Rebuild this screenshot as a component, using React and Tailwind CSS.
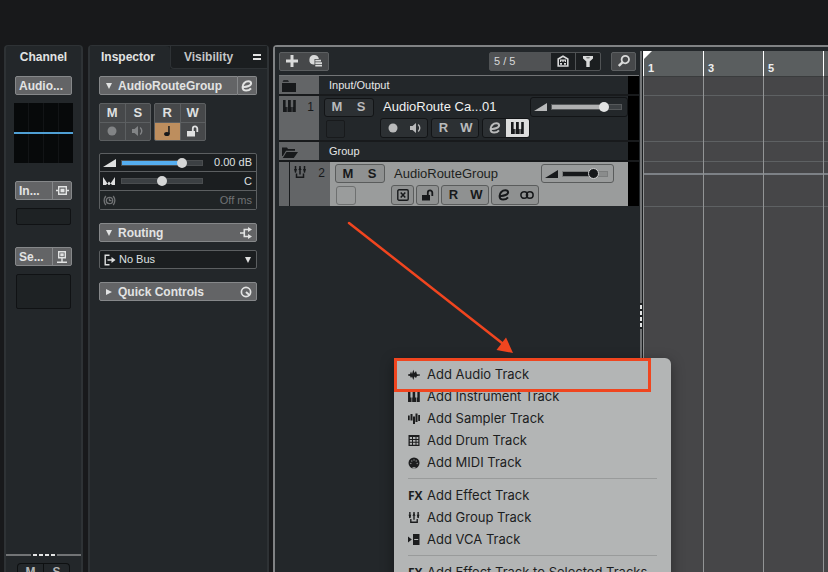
import React from "react";

function Icon({ w = 12, h = 12, box, className = "", children }) {
  return (
    <svg width={w} height={h} viewBox={box || `0 0 ${w} ${h}`} className={`shrink-0 ${className}`} fill="currentColor" aria-hidden="true">
      {children}
    </svg>
  );
}

const EditIcon = () => (
  <Icon w={12} h={12}>
    <path d="M2.4 6.9C6 7.1 10.2 5.6 10.1 3.3C10 1.8 8.6 1.3 7.3 1.3C4.2 1.3 1.6 3.8 1.6 7C1.6 9.3 3.1 10.6 5.2 10.6C7.1 10.6 8.8 9.8 10 8.3" fill="none" stroke="currentColor" strokeWidth="2" />
  </Icon>
);
const RecordIcon = () => (
  <Icon w={10} h={10}><circle cx="5" cy="5" r="4.500" /></Icon>
);
const SpeakerIcon = () => (
  <Icon w={13} h={12}>
    <path d="M1 4h2.500L7 1v10L3.500 8H1z" />
    <path d="M9.200 2.500q3.200 3.500 0 7" fill="none" stroke="currentColor" strokeWidth="1.300" />
  </Icon>
);
const NoteIcon = () => (
  <Icon w={10} h={12}>
    <path d="M6.200 1h1.500v8H6.200z" /><ellipse cx="4.900" cy="9" rx="2.800" ry="2" />
  </Icon>
);
const LockIcon = () => (
  <Icon w={13} h={12}>
    <path d="M1 6h8v5.500H1z" /><path d="M6.800 6V3.700a2.200 2.200 0 0 1 4.500 0V7" fill="none" stroke="currentColor" strokeWidth="1.800" />
  </Icon>
);
const WedgeIcon = () => (
  <Icon w={13} h={8}><path d="M0 8 13 0v8z" /></Icon>
);
const PanIcon = () => (
  <Icon w={12} h={8}><path d="M0 0 5.500 8H0zM12 0v8H6.500zM3 8h6L6 4.500z" /></Icon>
);
const DelayIcon = () => (
  <Icon w={13} h={11}>
    <g fill="none" stroke="currentColor" strokeWidth="1.300">
      <circle cx="6.500" cy="5.500" r="3.200" /><path d="M6.500 3.500v2.200h2M2.800 1Q-.5 5.500 2.800 10M10.200 1q3.300 4.500 0 9" />
    </g>
  </Icon>
);
const InsertIcon = () => (
  <Icon w={13} h={9}>
    <path d="M2.700.7h7.600v7.600H2.700zM0 4.500h2.500M10.500 4.500H13" fill="none" stroke="currentColor" strokeWidth="1.400" />
    <path d="M4.500 2.700h4v3.600h-4z" />
  </Icon>
);
const SendIcon = () => (
  <Icon w={12} h={12}>
    <path d="M2.700.7h6.600v6.100H2.700zM6 7v3.500M1 11.200h10" fill="none" stroke="currentColor" strokeWidth="1.400" />
    <path d="M4.300 2.300h3.400v3H4.300z" />
  </Icon>
);
const RouteIcon = () => (
  <Icon w={12} h={12}>
    <path d="M0 6h4M9.500 2.500H4.300v7h5.200" fill="none" stroke="currentColor" strokeWidth="1.600" />
    <path d="M8 0l4 2.500L8 5zM8 7l4 2.500L8 12z" />
  </Icon>
);
const KnobIcon = () => (
  <Icon w={12} h={12}>
    <circle cx="6" cy="6" r="4.600" fill="none" stroke="currentColor" strokeWidth="1.700" />
    <path d="M6 6l4 3.500" stroke="currentColor" strokeWidth="2" />
  </Icon>
);
const OutputIcon = () => (
  <Icon w={12} h={12}>
    <path d="M5.500 1.200H1.200v9.600h4.300M3.500 6H9" fill="none" stroke="currentColor" strokeWidth="1.400" />
    <path d="M7.500 3l4 3-4 3z" />
  </Icon>
);
const DownIcon = () => (
  <Icon w={6} h={6}><path d="M0 0h6L3 6z" /></Icon>
);
const RightIcon = () => (
  <Icon w={6} h={6}><path d="M0 0 6 3 0 6z" /></Icon>
);
const PlusIcon = () => (
  <Icon w={12} h={12}><path d="M4.500 0h3v4.500H12v3H7.500V12h-3V7.500H0v-3h4.500z" /></Icon>
);
const PresetIcon = () => (
  <Icon w={13} h={12}>
    <path d="M5 0a5 4.800 0 0 1 4.900 4H5.500v5.500H4.200A4.800 4.800 0 0 1 5 0z" />
    <path d="M6.300 4.800H12v1.700H6.300zM6.300 7.300H13v1.700H6.300zM6.300 9.800H13v1.700H6.300z" />
  </Icon>
);
const HomeIcon = () => (
  <Icon w={12} h={12}>
    <path d="M1.200 11V4L6 1.200 10.800 4v7z" fill="none" stroke="currentColor" strokeWidth="1.600" />
    <path d="M3 4.500h6V7H7.800V5.700H6.600V7H5.400V5.700H4.200V7H3zM3 8h2v1.700H3zM7 8h2v1.700H7z" />
  </Icon>
);
const FilterIcon = () => (
  <Icon w={10} h={11}><path d="M0 0h10v2.500L6.700 5.500V11H3.300V5.500L0 2.500z" /><ellipse cx="5" cy="1.700" rx="2" ry=".7" className="text-[#77797a]" /></Icon>
);
const SearchIcon = () => (
  <Icon w={12} h={12}>
    <circle cx="7.300" cy="4.600" r="3.700" fill="none" stroke="currentColor" strokeWidth="1.800" /><path d="M4.700 7.200.8 11" stroke="currentColor" strokeWidth="2.400" />
  </Icon>
);
const FolderIcon = () => (
  <Icon w={14} h={12}><path d="M0 3h14v9H0zM.5 1.800 1.500.3h4.500l1 1.500z" /></Icon>
);
const OpenFolderIcon = () => (
  <Icon w={16} h={12}><path d="M0 10V1.500h5l1 1.500h7v1.800H4L.8 10zM4.500 6H16l-4.200 6H.8z" /></Icon>
);
const keysPath = "M0 0h2.600v7h1.200v5H0zM5 0h2.800v7h.9v5H4.500V7H5zM10.200 0h2.600v12H9.400V7h.8z";
const KeysIcon = () => (
  <Icon w={13} h={12}><path d={keysPath} /></Icon>
);
const GroupIcon = ({ w = 12, h = 12 }) => (
  <Icon w={w} h={h} box="0 0 12 12">
    <path d="M1.500 0v6.500M6 0v8.500M10.500 0v6.500M2.500 7.500v3.700h7V7.500" fill="none" stroke="currentColor" strokeWidth="1.500" />
    <path d="M0 3h3L1.500 7zM4.300 4 6 1.200 7.700 4zM9 3h3l-1.500 4z" />
  </Icon>
);
const CrossBoxIcon = () => (
  <Icon w={12} h={12}>
    <rect x=".8" y=".8" width="10.400" height="10.400" rx="1.200" fill="none" stroke="currentColor" strokeWidth="1.400" />
    <path d="M3.700 3.500 8.300 8.500M8.300 3.500 3.700 8.500" stroke="currentColor" strokeWidth="1.500" />
  </Icon>
);
const LinkIcon = () => (
  <Icon w={14} h={10}>
    <circle cx="4.200" cy="5" r="3.300" fill="none" stroke="currentColor" strokeWidth="1.600" /><circle cx="9.800" cy="5" r="3.300" fill="none" stroke="currentColor" strokeWidth="1.600" />
  </Icon>
);

const MenuWave = () => (
  <Icon w={12} h={12}><path d="M0 5.500 2 5 3 2.500 4 5 5.300.8 6.500 4 8 2l1 3.200L12 5.500v1L9 7 8 9 6.500 7.500 5.300 11 4 7.500 3 9 2 7 0 6.500z" /></Icon>
);
const MenuKeys = () => (
  <Icon w={12} h={11} box="0 0 13 12"><path d={keysPath} /></Icon>
);
const MenuSampler = () => (
  <Icon w={12} h={11}><path d="M0 2.500h1.700v4.800H0zM2.500 1h2v6.500h-2zM5 3.500h2V11H5zM7.500.5h2v8.500h-2zM10.200 2H12v6h-1.800z" /></Icon>
);
const MenuDrum = () => (
  <Icon w={12} h={11}><path fillRule="evenodd" d="M.5 0h11v11H.5zM1.800 2v2H4V2zM5 2v2h2.500V2zM8.500 2v2h1.800V2zM1.800 5v1.700H4V5zM5 5v1.700h2.500V5zM8.500 5v1.700h1.800V5zM1.800 7.800v1.900H4V7.800zM5 7.800v1.900h2.500V7.800zM8.500 7.800v1.900h1.800V7.800z" /></Icon>
);
const MenuMidi = () => (
  <Icon w={12} h={12}>
    <circle cx="6" cy="6" r="5.500" />
    <g className="text-[#8b8d8d]"><circle cx="2.800" cy="6.500" r=".7" /><circle cx="3.800" cy="4" r=".7" /><circle cx="6" cy="3" r=".7" /><circle cx="8.200" cy="4" r=".7" /><circle cx="9.200" cy="6.500" r=".7" /><path d="M4.500 10h3v2h-3z" /></g>
  </Icon>
);
const MenuVca = () => (
  <Icon w={12} h={11}><path fillRule="evenodd" d="M0 2.500 3.800 5.500 0 8.500zM5 0h6.500v11H5zM6.200 5v1h4V5z" /></Icon>
);
const MenuFx = () => <span className="font-['Open_Sans',sans-serif] text-[12px] font-bold">FX</span>;

const raised = "flex h-[19px] w-full items-center rounded-[2px] border border-[#86888a] bg-[#636466] font-bold text-[#e2e3e3]";
const thumb =
  "appearance-none [&::-webkit-slider-thumb]:appearance-none [&::-webkit-slider-thumb]:rounded-full [&::-webkit-slider-thumb]:size-[10px] h-[6px] min-w-0";

function Slot({ label, icon }) {
  return (
    <button className={`${raised} justify-between text-[12px]`}>
      <span className="pl-[3px]">{label}</span>
      {icon && <span className="flex h-full w-[19px] items-center justify-center border-l border-[#86888a]">{icon}</span>}
    </button>
  );
}

function Channel() {
  return (
    <section className="flex w-[79px] shrink-0 flex-col rounded-t border-x-2 border-t border-[#2e3235] bg-[#23272a]">
      <h2 className="mt-[3px] text-center text-[12px] leading-[16px] font-bold text-[#e2e3e3]">Channel</h2>
      <div className="mt-[11px] flex flex-1 flex-col px-[9px]">
        <Slot label="Audio..." />
        <div className="-mx-px mt-2 flex h-[60px] items-center bg-[repeating-linear-gradient(90deg,#07090a_0_14px,#121416_14px_15px)]">
          <div className="h-[2px] w-full bg-[#4f9fd4]" />
        </div>
        <div className="mt-[18px]"><Slot label="In..." icon={<InsertIcon />} /></div>
        <div className="mx-px mt-2 h-[17px] rounded-[2px] border border-[#101214] bg-[#1e2224]" />
        <div className="mt-[22px]"><Slot label="Se..." icon={<SendIcon />} /></div>
        <div className="mx-px mt-2 h-[35px] rounded-[2px] border border-[#101214] bg-[#1e2224]" />
      </div>
      <div className="flex h-[2px] shrink-0 gap-[2px]">
        <span className="flex-1 bg-[#727476]" />
        {[0, 1, 2, 3].map((i) => <span key={i} className="w-1 bg-[#e4e5e5]" />)}
        <span className="flex-1 bg-[#727476]" />
      </div>
      <div className="mx-auto mt-[7px] flex h-[9px] w-[53px] shrink-0 items-start overflow-hidden rounded-t border border-b-0 border-[#0e1011] text-[12px] leading-[16px] font-bold text-[#b5b6b7]">
        <button className="flex-1 border-r border-[#0e1011]">M</button>
        <button className="flex-1">S</button>
      </div>
    </section>
  );
}

function Pad({ items }) {
  return (
    <div className="grid h-[38px] w-[52px] grid-cols-2 grid-rows-2 gap-px overflow-hidden rounded-[2px] border border-[#5c5f61] bg-[#5c5f61] text-[13px] font-bold text-[#dfe0e0]">
      {items.map(([name, face, tone]) => (
        <button key={name} aria-label={name} className={`flex min-h-0 items-center justify-center leading-[16px] ${tone || "bg-[#46484a]"}`}>{face}</button>
      ))}
    </div>
  );
}

function Heading({ caret, children, icon }) {
  return (
    <button className={`${raised} pr-[4px] pl-[6px] text-[12px]`}>
      {caret}
      <span className="flex-1 pl-[6px] text-left">{children}</span>
      {icon}
    </button>
  );
}

function Inspector() {
  return (
    <section className="ml-[5px] w-[181px] shrink-0 rounded-t border-x-2 border-t border-[#2e3235] bg-[#23272a]">
      <div role="tablist" className="flex h-[23px] bg-[#1b1e20] text-[12px] font-bold text-[#e2e3e3]">
        <button role="tab" aria-selected="true" className="w-[80px] rounded-tr border-b border-[#23272a] bg-[#23272a] pr-1">Inspector</button>
        <button role="tab" aria-selected="false" className="w-[76px] rounded-bl border-b border-l border-[#2e3235] text-[#c5c6c7]">Visibility</button>
        <button aria-label="Tab options" className="flex flex-1 items-center justify-center border-b border-[#2e3235]">
          <Icon w={8} h={6}><path d="M0 0h8v2H0zM0 4h8v2H0z" /></Icon>
        </button>
      </div>
      <div className="pt-[7px] pr-[10px] pl-[9px]">
        <div className="flex text-[12px]">
          <button className={`${raised} rounded-r-none pl-[6px]`}>
            <DownIcon /><span className="pl-[6px]">AudioRouteGroup</span>
          </button>
          <button aria-label="Edit channel" className="flex h-[19px] w-[19px] shrink-0 items-center justify-center rounded-r-[2px] border border-l-0 border-[#86888a] bg-[#636466] text-[#e2e3e3]"><EditIcon /></button>
        </div>
        <div className="mt-2 flex gap-[3px]">
          <Pad items={[["Mute", "M"], ["Solo", "S"], ["Record", <RecordIcon />, "bg-[#46484a] text-[#828486]"], ["Monitor", <SpeakerIcon />, "bg-[#46484a] text-[#828486]"]]} />
          <Pad items={[["Read", "R"], ["Write", "W"], ["Time base", <NoteIcon />, "bg-[#bd8e5e] text-[#17191b]"], ["Lock", <LockIcon />]]} />
        </div>
        <div className="mt-3 divide-y divide-[#5c5f61] rounded-[2px] border border-[#5c5f61] bg-[#1b1e20] text-[11px] text-[#dfe0e0]">
          <label className="flex h-[18px] items-center px-[3px]">
            <WedgeIcon />
            <input type="range" aria-label="Volume" defaultValue="78" className={`${thumb} ml-[5px] w-[82px] border border-[#4a4d4f] bg-[linear-gradient(90deg,#55aef0_75%,#3c4043_75%)] [&::-webkit-slider-thumb]:bg-[#d5d6d6]`} />
            <span className="flex-1 pr-px text-right">0.00 dB</span>
          </label>
          <label className="flex h-[19px] items-center px-[3px]">
            <span className="flex w-[13px]"><PanIcon /></span>
            <input type="range" aria-label="Pan" defaultValue="50" className={`${thumb} ml-[5px] w-[82px] border border-[#4a4d4f] bg-[#3c4043] [&::-webkit-slider-thumb]:bg-[#d5d6d6]`} />
            <span className="flex-1 pr-px text-right">C</span>
          </label>
          <div className="flex h-[18px] items-center justify-between bg-[#202426] px-[3px] text-[#717375]"><DelayIcon /><span className="pr-px">Off ms</span></div>
        </div>
        <div className="mt-[13px]"><Heading caret={<DownIcon />} icon={<RouteIcon />}>Routing</Heading></div>
        <div className="mt-2 flex h-[19px] items-center rounded-[2px] border border-[#5c5f61] bg-[#1b1e20] pr-[5px] pl-1 text-[#dfe0e0]">
          <OutputIcon />
          <select aria-label="Output bus" className="min-w-0 flex-1 appearance-none bg-transparent pl-[3px] text-[11px]"><option>No Bus</option></select>
          <DownIcon />
        </div>
        <div className="mt-[13px]"><Heading caret={<RightIcon />} icon={<KnobIcon />}>Quick Controls</Heading></div>
      </div>
    </section>
  );
}

function Cluster({ items, light }) {
  return (
    <div className={`flex h-[20px] shrink-0 overflow-hidden rounded-[3px] border text-[13px] font-bold ${light ? "border-[#5a5c5c] bg-[#8f9191] text-[#17191b]" : "border-[#121416] bg-[#2c3033] text-[#b9babb]"}`}>
      {items.map(([name, face, tone]) => (
        <button key={name} aria-label={name} className={`flex items-center justify-center ${items.length > 1 ? "w-[23px]" : "w-[21px]"} ${tone || ""}`}>{face}</button>
      ))}
    </div>
  );
}

function MuteSolo({ light }) {
  return (
    <div className={`flex h-[19px] w-[50px] shrink-0 rounded-[3px] border text-[13px] leading-[16px] font-bold ${light ? "border-[#5a5c5c] bg-[#8f9191] text-[#17191b]" : "border-[#121416] bg-[#2c3033] text-[#b9babb]"}`}>
      <button className="flex-1">M</button>
      <button className="flex-1">S</button>
    </div>
  );
}

function Folder({ icon, children }) {
  return (
    <div className="flex h-[20px] border-b-2 border-[#181a1c] text-[11px] text-[#e6e7e7]">
      <div className="flex w-[40px] items-center bg-[#636567] pt-px pl-[3px] text-[#17191b]">{icon}</div>
      <span className="flex flex-1 items-center pl-[10px]">{children}</span>
      <div className="w-[11px] bg-black" />
    </div>
  );
}

function TrackList() {
  return (
    <section className="flex w-[365px] shrink-0 flex-col bg-[#23272a] pr-px pl-1">
      <div className="flex h-[29px] items-center gap-[10px] border-b border-[#737577] pr-[3px] text-[#d9dada]">
        <div className="flex h-[19px] w-[50px] items-center justify-around rounded-[2px] border border-[#5c5f61] bg-[#46484a]">
          <button aria-label="Add track"><PlusIcon /></button>
          <button aria-label="Use track preset"><PresetIcon /></button>
        </div>
        <span className="flex-1" />
        <div className="flex h-[19px] rounded-[2px] border border-[#505355] bg-[#1b1e20]">
          <output aria-label="Visible tracks" className="w-[61px] bg-[#505254] pl-1 text-[11px] leading-[17px]">5 / 5</output>
          <button aria-label="Zones" className="flex w-[25px] items-center justify-center border-r border-[#505355]"><HomeIcon /></button>
          <button aria-label="Filter" className="flex w-[24px] items-center justify-center"><FilterIcon /></button>
        </div>
        <button aria-label="Find track" className="flex h-[19px] w-[25px] items-center justify-center rounded-[2px] border border-[#5c5f61] bg-[#46484a]"><SearchIcon /></button>
      </div>
      <Folder icon={<FolderIcon />}>Input/Output</Folder>
      <div className="flex h-[46px] border-b-2 border-[#181a1c]">
        <div className="flex w-[40px] justify-between bg-[#636567] pt-1 pr-[5px] pl-1 text-[12px] leading-[14px] text-[#17191b]"><KeysIcon /><span>1</span></div>
        <div className="min-w-0 flex-1 pl-[5px]">
          <div className="flex h-[22px] items-center">
            <MuteSolo />
            <span className="flex-1 pl-[9px] text-[13px] text-[#f0f1f1]">AudioRoute Ca...01</span>
            <label className="flex h-[20px] w-[98px] items-center justify-between rounded-[3px] border border-[#121416] pr-[5px] pl-[3px] text-[#b9babb]">
              <WedgeIcon />
              <input type="range" aria-label="Track 1 volume" defaultValue="79" className={`${thumb} w-[71px] border border-[#55585a] bg-[linear-gradient(90deg,#b0b1b2_73%,#3c4043_73%)] [&::-webkit-slider-thumb]:bg-[#e2e3e3]`} />
            </label>
          </div>
          <div className="flex items-center gap-[3px]">
            <button aria-label="Track 1 slot" className="mr-[32px] ml-[2px] h-[18px] w-[19px] self-end rounded-[2px] border border-[#181a1c]" />
            <Cluster items={[["Record", <RecordIcon />], ["Monitor", <SpeakerIcon />]]} />
            <Cluster items={[["Read", "R"], ["Write", "W"]]} />
            <Cluster items={[["Edit", <EditIcon />], ["Instrument", <KeysIcon />, "bg-[#dcdddd] text-[#17191b]"]]} />
          </div>
        </div>
        <div className="w-[11px] bg-black" />
      </div>
      <Folder icon={<OpenFolderIcon />}>Group</Folder>
      <div className="flex h-[44px] bg-[#636567]">
        <div className="ml-[10px] flex w-[41px] justify-between border-l border-[#181a1c] pt-1 pr-[5px] pl-1 text-[12px] leading-[14px] text-[#17191b]"><GroupIcon /><span>2</span></div>
        <div className="min-w-0 flex-1 bg-[#9a9c9c] pl-[5px]">
          <div className="flex h-[23px] items-center pr-[14px]">
            <MuteSolo light />
            <span className="flex-1 pl-[9px] text-[13px] text-[#1d1f20]">AudioRouteGroup</span>
            <label className="flex h-[19px] w-[73px] items-center justify-between rounded-[3px] border border-[#5a5c5c] pr-[5px] pl-[3px] text-[#17191b]">
              <WedgeIcon />
              <input type="range" aria-label="Track 2 volume" defaultValue="76" className={`${thumb} w-[46px] border border-[#7b7d7d] bg-[linear-gradient(90deg,#17191b_72%,#8a8c8c_72%)] [&::-webkit-slider-thumb]:size-[11px] [&::-webkit-slider-thumb]:border [&::-webkit-slider-thumb]:border-[#d0d1d1] [&::-webkit-slider-thumb]:bg-[#17191b]`} />
            </label>
          </div>
          <div className="flex items-center gap-[2px]">
            <button aria-label="Track 2 slot" className="mr-[33px] ml-px h-[19px] w-[20px] rounded-[3px] border border-[#6e7070]" />
            <Cluster light items={[["Clip", <CrossBoxIcon />]]} />
            <Cluster light items={[["Lock", <LockIcon />]]} />
            <Cluster light items={[["Read", "R"], ["Write", "W"]]} />
            <Cluster light items={[["Edit", <EditIcon />], ["Link", <LinkIcon />]]} />
          </div>
        </div>
        <div className="w-[11px] bg-black" />
      </div>
    </section>
  );
}

function Timeline() {
  const bars = Array.from({ length: 12 }, (_, i) => i * 2 + 1);
  return (
    <section className="relative flex min-w-0 flex-1 flex-col overflow-hidden bg-[#464648]">
      <div className="flex h-[25px] shrink-0 bg-[#5a5e5f]">
        {bars.map((n) => (
          <div key={n} className="w-[60px] shrink-0 border-l border-white pt-[9px] pl-1 text-[11px] leading-[16px] font-bold text-[#eeefef]">{n}</div>
        ))}
      </div>
      <div className="h-[20px] shrink-0 border-y border-b-[#5e6163] border-t-[#3a3c3d]" />
      <div className="h-[46px] shrink-0 border-b border-[#5e6163]" />
      <div className="h-[20px] shrink-0 border-b border-[#5e6163]" />
      <div className="h-[13px] shrink-0 border-b-2 border-[#7d8186]" />
      <div className="h-[32px] shrink-0 border-b border-[#5e6163]" />
      <div className="absolute inset-0 top-[25px] flex overflow-hidden">
        {bars.map((n) => <div key={n} className="w-[60px] shrink-0 border-l border-[#929495]" />)}
      </div>
      <svg width="9" height="9" viewBox="0 0 9 9" className="absolute top-0 left-0" aria-hidden="true"><path d="M0 0h9L0 9z" fill="#fff" /></svg>
    </section>
  );
}

const groups = [
  [["Add Audio Track", <MenuWave />], ["Add Instrument Track", <MenuKeys />], ["Add Sampler Track", <MenuSampler />], ["Add Drum Track", <MenuDrum />], ["Add MIDI Track", <MenuMidi />]],
  [["Add Effect Track", <MenuFx />], ["Add Group Track", <GroupIcon w={12} h={11} />], ["Add VCA Track", <MenuVca />]],
  [["Add Effect Track to Selected Tracks", <MenuFx />]],
];

function TrackMenu() {
  return (
    <div role="menu" className="absolute top-[358px] left-[394px] w-[277px] rounded-tr-[6px] bg-[#b3b5b5] pt-[5px] font-[Inter,sans-serif] text-[13px] text-[#1c1d1e] shadow-[0_4px_14px_rgba(0,0,0,0.4)]">
      {groups.map((group, i) => (
        <React.Fragment key={i}>
          {i > 0 && <hr className="mx-[14px] my-[5px] border-[#999b9b]" />}
          {group.map(([label, icon]) => (
            <button key={label} role="menuitem" className="flex h-[22px] w-full items-center pt-[2px] pl-[14px] text-left whitespace-nowrap">
              <span className="flex h-[20px] w-[19px] items-center pb-px">{icon}</span>{label}
            </button>
          ))}
        </React.Fragment>
      ))}
    </div>
  );
}

export default function App() {
  return (
    <main className="relative flex h-screen overflow-hidden bg-[#18191b] pt-[45px] pl-1 font-['Liberation_Sans',Arial,sans-serif]">
      <Channel />
      <Inspector />
      <div className="ml-1 flex min-w-0 flex-1 rounded-tl border-t-2 border-l-2 border-[#808284] bg-[#23272a]">
        <TrackList />
        <div className="mt-1 flex w-[3px] shrink-0 flex-col items-start gap-[2px] bg-[#1b1e20]">
          <span className="h-[252px] w-[2px] bg-[#727476]" />
          {[0, 1, 2, 3].map((i) => <span key={i} className="h-1 w-[2px] bg-[#e4e5e5]" />)}
          <span className="w-[2px] flex-1 bg-[#727476]" />
        </div>
        <div className="flex min-w-0 flex-1 pt-1"><Timeline /></div>
      </div>
      <TrackMenu />
      <div className="pointer-events-none absolute top-[358px] left-[394px] h-[34px] w-[257px] border-3 border-[#f0451f]" />
      <svg width="180" height="140" viewBox="0 0 180 140" className="pointer-events-none absolute top-[216px] left-[340px]" aria-hidden="true">
        <path d="M9 7 162 127" stroke="#f0451f" strokeWidth="2.500" fill="none" strokeLinecap="round" />
        <path d="M173 137 156.500 134 166 121.500z" fill="#f0451f" />
      </svg>
    </main>
  );
}
